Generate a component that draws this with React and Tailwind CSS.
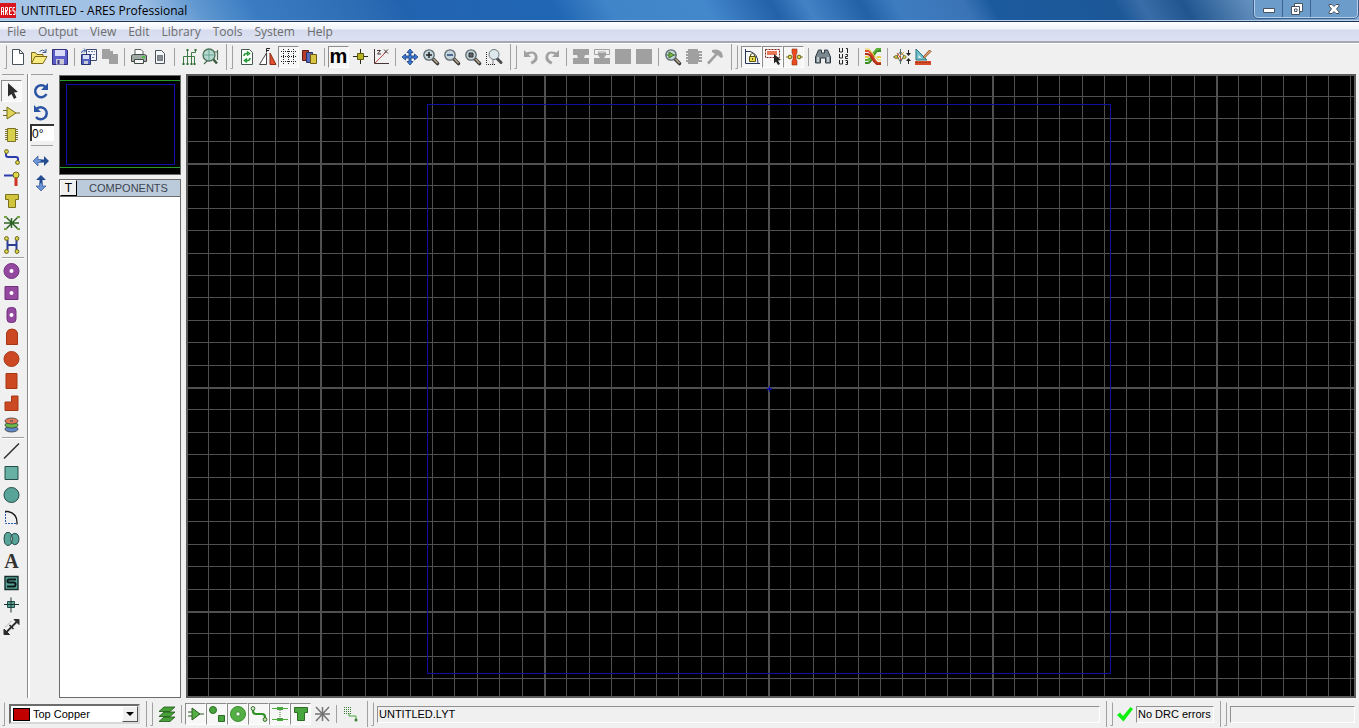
import React from 'react'

const menus = ['File', 'Output', 'View', 'Edit', 'Library', 'Tools', 'System', 'Help']

// shared shapes
const Lens = ({ children }) => (
  <>
    <path d="M11.500 11.500l5 5" stroke="#3c3c3c" strokeWidth="3.600" strokeLinecap="round" />
    <path d="M12.500 12l4 4.300" stroke="#b8a888" strokeWidth="1.400" />
    <circle cx="8" cy="8" r="5.200" fill="#c4d6dc" stroke="#5c666c" strokeWidth="1.300" />
    {children}
  </>
)

const Dot = ({ x, y, fill = '#e0d848', stroke = '#66621c' }) => (
  <circle cx={x} cy={y} r="1.900" fill={fill} stroke={stroke} strokeWidth="1" />
)

const TShape = ({ fill, stroke }) => (
  <path d="M3.500 3.500h13v5h-3v8h-7v-8h-3z" fill={fill} stroke={stroke} />
)

const icons = {
  newFile: <path d="M4.500 2.500h7l4 4v11h-11zM11.500 2.500v4h4" fill="#fff" stroke="#4a545e" />,
  open: (
    <>
      <path d="M2.500 16V5.500h4l1.500 2h6V10" fill="#f2e070" stroke="#7c6a1c" />
      <path d="M2.500 16.500l3.500-7h12l-4 7z" fill="#f8ec80" stroke="#7c6a1c" />
      <path d="M10.500 4.500q3-3 6 0M17 2v3.500h-3.500" fill="none" stroke="#3a5c8c" />
    </>
  ),
  save: (
    <>
      <path d="M2.500 2.500h14l1 1v14h-15z" fill="#5c5cc8" stroke="#30307c" />
      <path d="M5 3h10v6H5z" fill="#d8dcf8" />
      <path d="M6 12h8v5.500H6z" fill="#c8c8d4" />
      <path d="M7.500 13h2v4h-2z" fill="#38388c" />
    </>
  ),
  importFile: (
    <>
      <path d="M7.500 2.500h10v11h-10z" fill="#f4f4fc" stroke="#3c4870" />
      <path d="M9 4.500h7M11 7.500h5M13 10.500h3" stroke="#6c78b0" strokeDasharray="2 1" />
      <path d="M2.500 7.500h9v10h-9z" fill="#5464c0" stroke="#283474" />
      <path d="M4 8h6v4H4z" fill="#d8e0f8" />
      <path d="M5 14h4v3H5z" fill="#c8ccd8" />
      <path d="M2.500 6q0-3 4-2.500M5 1.500l2 2-2 2" fill="none" stroke="#3058a0" />
    </>
  ),
  exportFile: <path d="M2 2h8v2h3v3h5v10H9v-5H2z" fill="#a0a0a0" />,
  print: (
    <>
      <path d="M6 8V2.500h6l2 2V8" fill="#fff" stroke="#58605c" />
      <path d="M2.500 8.500l2-1h11l2 1v6h-15z" fill="#a0aaa4" stroke="#424a46" />
      <path d="M5.500 12.500h9v4h-9z" fill="#f4f4f4" stroke="#424a46" />
      <path d="M13 10h3" stroke="#48c040" strokeWidth="2" />
    </>
  ),
  printArea: (
    <>
      <path d="M5.500 3.500h6l3 3v10h-9z" fill="#f4f6f8" stroke="#48525a" />
      <path d="M7.500 8.500h5v5h-5z" fill="#848c92" stroke="#2c3238" strokeDasharray="1 1" />
    </>
  ),
  netlist: (
    <>
      <path d="M4.500 17V9.500h11V17M8.500 3v14M12.500 9v8M12.500 9V5.500h4V3" fill="none" stroke="#3e7a46" />
      <path d="M3.500 16h2v2h-2zM7.500 16h2v2h-2zM11.500 16h2v2h-2zM14.500 16h2v2h-2zM7.500 2h2v2h-2zM15.500 2h2v2h-2z" fill="#2e6a36" />
    </>
  ),
  netSearch: (
    <>
      <path d="M13 12l4 4.500" stroke="#3c5c44" strokeWidth="2.500" />
      <path d="M8 13l-4 4M17.500 3v10M14 5h4" stroke="#4c6c54" strokeWidth="1.200" />
      <circle cx="9" cy="8" r="6" fill="#b4d8d0" stroke="#4c7058" strokeWidth="1.300" />
      <path d="M4 8h10M9 3v10" stroke="#6ca898" />
    </>
  ),
  redraw: (
    <>
      <path d="M4.500 2.500h8l3 3v12h-11z" fill="#f8fff8" stroke="#485850" />
      <path d="M7 9q0-3 4-2.500M10 4.500l2.500 2-2.500 2M13 11q0 3-4 2.500M10 11.500l-2.500 2 2.500 2" fill="none" stroke="#1e9430" strokeWidth="1.500" />
    </>
  ),
  flip: (
    <>
      <path d="M8.500 6v11.500h-7z" fill="#fff" stroke="#444" />
      <path d="M12 6v11.500h6z" fill="#e05030" stroke="#8c2c14" />
      <path d="M8.500 5.500V1.500H12M8.500 3.500h2.500" fill="none" stroke="#222" />
    </>
  ),
  grid: (
    <g stroke="#222" strokeDasharray="1 1">
      <path d="M2 4.500h16M2 9.500h16M2 14.500h16M4.500 2v16M9.500 2v16M14.500 2v16" />
    </g>
  ),
  layers3: (
    <>
      <path d="M2.500 3.500h6v10h-6z" fill="#b43c28" stroke="#5c1c14" />
      <path d="M6.500 5.500h6v10h-6z" fill="#5868b8" stroke="#28306c" />
      <path d="M10.500 7.500h6v9h-6z" fill="#d8c440" stroke="#6c5c14" />
    </>
  ),
  origin: (
    <>
      <path d="M3 9.500h15M10.500 2v15" stroke="#2a2a1c" />
      <path d="M7.500 6.500h6v6h-6z" fill="#b8b420" stroke="#5c5810" />
    </>
  ),
  polar: (
    <>
      <path d="M3.500 2v14.500H18" fill="none" stroke="#443434" />
      <path d="M4 16L15 5" stroke="#c84848" />
      <path d="M6 3.500h3.500L6.500 7h3.500M13 2.500l4 4M17 2.500l-4 4" fill="none" stroke="#443434" />
    </>
  ),
  pan: (
    <path d="M10 2l3 3.500h-2V9h3.500V7L18 10l-3.500 3v-2H11v3.500h2L10 18l-3-3.500h2V11H5.500v2L2 10l3.500-3v2H9V5.500H7z" fill="#3c7cd4" stroke="#173a7c" strokeWidth=".8" />
  ),
  zoomIn: <Lens><path d="M5 8h6M8 5v6" stroke="#222" strokeWidth="1.500" /></Lens>,
  zoomOut: <Lens><path d="M5 8h6" stroke="#2c4478" strokeWidth="1.500" /></Lens>,
  zoomAll: <Lens><path d="M6 6h4v4H6z" fill="#5c6468" stroke="#333" /></Lens>,
  zoomArea: (
    <>
      <path d="M2.500 5v12.500H11M9 17.500V12" fill="none" stroke="#222" strokeDasharray="1 1" />
      <path d="M13 11.500l4 4" stroke="#4c4c4c" strokeWidth="3" strokeLinecap="round" />
      <circle cx="10" cy="7.500" r="5" fill="#dce8ec" stroke="#6c787c" />
    </>
  ),
  undo: (
    <path d="M3 3v7h7L7.500 7.500Q12 5 13.500 8.500T9.500 15l1.500 2.500q6.500-3 5.500-8.500Q14.500 2.500 5.500 5.500z" fill="#a0a0a0" />
  ),
  redo: (
    <path d="M17 3v7h-7l2.500-2.500Q8 5 6.500 8.500T10.500 15L9 17.500Q2.500 14.500 3.500 9 5.500 2.500 14.500 5.500z" fill="#a0a0a0" />
  ),
  blockCopy: <path d="M2 2h16v6h-4l-1 3h5v6H2v-6h5L6 8H2z" fill="#a0a0a0" />,
  blockMove: (
    <>
      <path d="M2.500 2.500h15v5h-4V5h-7v2.500h-4z" fill="none" stroke="#a0a0a0" />
      <path d="M6 6h8v2l-2 3h6v6H2v-6h6L6 8z" fill="#a0a0a0" />
    </>
  ),
  block: <path d="M2 2h16v15H2z" fill="#a0a0a0" />,
  pick: <Lens><path d="M6 5l5 3-5 3zM3 8h3M11 8h2" fill="#7cb83c" stroke="#3c7030" /></Lens>,
  makePackage: (
    <path d="M4 2h10v2h4v2h-3v1h3v2h-3v1h3v2h-3v1h3v2h-4v2H4v-2H2v-2h2v-1H2v-2h2V9H2V7h2V6H2V4h2z" fill="#a0a0a0" />
  ),
  hammer: <path d="M7 3q7-2 10 3l1 4-2 1-3.500-3L4 17.500l-2-2L10 7 7 5z" fill="#a0a0a0" />,
  lock: (
    <>
      <path d="M3.500 2v14.500H18M4 4.500h4q8 2 8 12" fill="none" stroke="#26365c" />
      <path d="M7.500 9.500h6v5h-6z" fill="#e8dc48" stroke="#5c5414" />
      <path d="M8.500 9V7.500q2-2 4 0V9M10.500 11v2" fill="none" stroke="#5c5414" />
    </>
  ),
  autoSelect: (
    <>
      <path d="M2.500 2.500h14v8h-14z" fill="none" stroke="#7c2018" strokeDasharray="2 1" />
      <path d="M4 4h10v4H4z" fill="#e87858" />
      <path d="M11 7l7 6-3 .5 2 3.500-2 1-2-3.500-2 2z" fill="#222" />
    </>
  ),
  neck: (
    <>
      <path d="M8 2h5v4l-1 2v4l1 2v4H8v-4l1-2V8L8 6z" fill="#e84c20" stroke="#943010" strokeWidth=".6" />
      <path d="M2 10h3M16 10h3" stroke="#8c7c20" />
      <Dot x={6} y={10} />
      <Dot x={15} y={10} />
    </>
  ),
  find: (
    <>
      <path d="M2.500 10l3-7h3v3h3V3h3l3 7v6h-5v-5h-5v5h-5z" fill="#7c8890" stroke="#303a42" />
      <path d="M5 10v5M15 10v5" stroke="#d4dce0" strokeWidth="1.500" />
    </>
  ),
  annotate: (
    <g fill="none" stroke="#222">
      <path d="M5.500 1v4h3V1M12 1.500h1.500V6M5.500 7v4h3V7M11.500 7.500h2v2h-2v2H14M5.500 13v4h3v-4M11.500 13.500h2v4h-2M12 15.500h1" />
    </g>
  ),
  autoRoute: (
    <g fill="none" strokeWidth="2.200">
      <path d="M2 16h3q2 0 5-6t5-6h3" stroke="#3c8c24" />
      <path d="M2 13h2q3 0 5-4t5-7h4" stroke="#5cac34" />
      <path d="M2 4h3q2 0 5 6t5 6h3" stroke="#e04c24" />
      <path d="M2 7h2q3 0 5 4t5 6h4" stroke="#b03018" />
      <path d="M2 10h4M14 10h4" stroke="#e4d040" />
      <path d="M2 2h4l9 11h3" stroke="#e8d848" strokeWidth="1" />
    </g>
  ),
  drc: (
    <>
      <path d="M8.500 2v15M1 10h3M5 9l3.500-4.500L12 9l-3.500 6z" fill="none" stroke="#5c6c64" />
      <path d="M5 12l7-7" stroke="#d8a030" />
      <path d="M5 6l5 7" stroke="#d84c30" />
      <circle cx="4" cy="10" r="1.500" fill="#e0d848" stroke="#66621c" strokeWidth=".8" />
      <circle cx="12.500" cy="10" r="1.500" fill="#e0d848" stroke="#66621c" strokeWidth=".8" />
      <path d="M16.500 3v4M16.500 17v-4" stroke="#222" />
      <path d="M14 6h5l-2.500 3zM14 14h5l-2.500-3z" fill="#222" />
    </>
  ),
  cadcam: (
    <>
      <path d="M3 2v11h11z" fill="#6cc0cc" stroke="#287480" />
      <path d="M5.500 8v3h3z" fill="#eee" />
      <path d="M2 14h16v4H2z" fill="#d84c28" />
      <path d="M4 15v1M7 15v1M10 15v1M13 15v1M16 15v1" stroke="#641c0c" />
      <path d="M10 10l6.500-7 1.500 1.500-6.500 6.500z" fill="#e8a060" stroke="#6c3c1c" strokeWidth=".8" />
    </>
  ),

  // mode selector
  arrow: <path d="M6 2l10 9-4 .5 2.500 5-2.500 1.500-2.500-5L6 15.500z" fill="#2c2c2c" />,
  component: (
    <>
      <path d="M1 7.500h4M1 12.500h4M14 10h4" stroke="#6c6820" />
      <path d="M5 4l9 6-9 6z" fill="#e0d458" stroke="#78701c" />
    </>
  ),
  packageMode: (
    <>
      <path d="M3 4.500h13M3 6.500h13M3 8.500h13M3 10.500h13M3 12.500h13M3 14.500h13" stroke="#7c7438" />
      <path d="M5.500 3.500h8v13h-8z" fill="#d8d04c" stroke="#7c7424" />
    </>
  ),
  track: (
    <>
      <path d="M4 4v4q0 2 2 2h8q2 0 2 2v4" fill="none" stroke="#2c3cac" strokeWidth="2" />
      <Dot x={4.5} y={4.5} />
      <Dot x={15.5} y={15.5} />
    </>
  ),
  via: (
    <>
      <path d="M2 6.500h10" stroke="#2c3cac" strokeWidth="2" />
      <path d="M14 8v9" stroke="#cc3420" strokeWidth="3" />
      <circle cx="14" cy="6" r="3" fill="#e0d848" stroke="#6c6820" />
    </>
  ),
  zoneMode: <TShape fill="#d0c43c" stroke="#78701c" />,
  ratsnest: (
    <>
      <path d="M4 4l12 12M16 4L4 16M2 10h15M9.500 5v10" stroke="#2c6424" strokeWidth="1.500" />
      <path d="M2 3h3v2H2zM15 3h3v2h-3zM2 15h3v2H2zM15 15h3v2h-3z" fill="#74a444" />
    </>
  ),
  connect: (
    <>
      <path d="M5.500 5v10M14.500 5v10M5.500 10h9" fill="none" stroke="#2c3c94" strokeWidth="2" />
      <Dot x={4.5} y={3.5} />
      <Dot x={15} y={3.5} />
      <Dot x={4.5} y={16.5} />
      <Dot x={15} y={16.5} />
    </>
  ),
  padRound: (
    <>
      <circle cx="9.500" cy="10" r="7.500" fill="#9448a0" stroke="#70307c" />
      <circle cx="9.500" cy="10" r="2" fill="#fff" />
    </>
  ),
  padSquare: (
    <>
      <path d="M3 3.500h13v13H3z" fill="#9448a0" stroke="#70307c" />
      <circle cx="9.500" cy="10" r="2" fill="#fff" />
    </>
  ),
  padDil: (
    <>
      <rect x="5" y="2.500" width="9" height="15" rx="3.500" fill="#9448a0" stroke="#70307c" />
      <circle cx="9.500" cy="10" r="2" fill="#fff" />
    </>
  ),
  padEdge: <path d="M4.500 17.500V6q1-4 5.500-4t5.500 4v11.500z" fill="#cc4822" stroke="#a43814" />,
  smtRound: <circle cx="9.500" cy="10" r="7.500" fill="#cc4822" stroke="#a43814" />,
  smtRect: <path d="M4 2.500h11v15H4z" fill="#cc4822" stroke="#a43814" />,
  smtPoly: <path d="M9.500 3h6.500v14.500H3V9h6.500z" fill="#cc4822" stroke="#a43814" />,
  padStack: (
    <g stroke="#3c3c3c" strokeWidth=".8">
      <ellipse cx="9.500" cy="14" rx="6.500" ry="3" fill="#5c88cc" />
      <ellipse cx="9.500" cy="10" rx="6.500" ry="3" fill="#68b848" />
      <ellipse cx="9.500" cy="6" rx="6.500" ry="3" fill="#e87858" />
      <ellipse cx="9.500" cy="6" rx="1.500" ry=".6" fill="#fff" />
    </g>
  ),
  line: <path d="M2 17.500L17 2.500" stroke="#2c2c30" strokeWidth="1.400" />,
  box: <path d="M3 3.500h13v13H3z" fill="#68b0a4" stroke="#244c48" />,
  circle: <circle cx="9.500" cy="10" r="7.500" fill="#58a498" stroke="#244c48" />,
  arc: (
    <>
      <path d="M3.500 4v12.500H15" fill="none" stroke="#2858b0" strokeDasharray="2 1" />
      <path d="M3 4.500h3q9 2 9 11v2" fill="none" stroke="#1c1c1c" strokeWidth="1.300" />
    </>
  ),
  path: (
    <path d="M9.500 5.500q-2-3-5-2Q2 5 2 10t3 6.500q3 .5 4.500-2.500 3 3 5.500 1 2-1.500 2-5t-2-5q-3-2-5.500 1 2.500 4 0 8-1.500-4 0-8.500z" fill="#58a498" stroke="#244c48" />
  ),
  symbol: (
    <>
      <path d="M3 3.500h13v13H3z" fill="#58a498" stroke="#16302c" strokeWidth="1.400" />
      <path d="M14 6.500H7q-1.500 0-1.500 1.500T7 9.500h5q1.500 0 1.500 2T12 13.500H5" fill="none" stroke="#0c1816" strokeWidth="2" />
    </>
  ),
  marker: (
    <>
      <path d="M5.500 6.500h7v6h-7z" fill="#58a498" stroke="#244c48" />
      <path d="M2 9.500h15M9 2.500v15" stroke="#1c3430" />
    </>
  ),
  dimension: (
    <>
      <path d="M4 15.500L15.500 4" stroke="#2c2c2c" strokeWidth="1.800" />
      <path d="M12 2.500h5v5zM2 12v5.500h5.500z" fill="#2c2c2c" stroke="#2c2c2c" />
      <path d="M7.500 8l4 4" stroke="#2c2c2c" strokeWidth="1.600" />
      <path d="M4 9.500l5-5" stroke="#444" strokeDasharray="1 2" />
    </>
  ),

  rotateCw: (
    <>
      <path d="M14.500 6A6 6 0 1 0 15.500 13" fill="none" stroke="#2c54a4" strokeWidth="2.500" />
      <path d="M17 2v7h-7z" fill="#2c54a4" />
    </>
  ),
  rotateCcw: (
    <>
      <path d="M5.500 6A6 6 0 1 1 5 14" fill="none" stroke="#2c54a4" strokeWidth="2.500" />
      <path d="M3 2v7h7z" fill="#2c54a4" />
    </>
  ),
  mirrorX: (
    <>
      <path d="M2 10l5-5v3.500h3v3H7V15z" fill="#6c94d4" stroke="#34589c" strokeWidth=".7" />
      <path d="M18 10l-5-5v3.500h-3v3h3V15z" fill="#244c90" />
    </>
  ),
  mirrorY: (
    <>
      <path d="M10 2L5 7h3.500v3h3V7H15z" fill="#244c90" />
      <path d="M10 18l-5-5h3.500v-3h3v3H15z" fill="#6c94d4" stroke="#34589c" strokeWidth=".7" />
    </>
  ),

  // selection filter
  layerStack: (
    <g fill="#48a038" stroke="#1c5414" strokeWidth=".8">
      <path d="M2 17.500l5-4.500h11l-5 4.500z" />
      <path d="M2 12.500L7 8h11l-5 4.500z" />
      <path d="M2 7.500L7 3h11l-5 4.500z" />
    </g>
  ),
  fComponent: (
    <>
      <path d="M2 8h4M2 12h4M14 10h4" stroke="#285c20" />
      <path d="M6 4l8 6-8 6z" fill="#54b044" stroke="#285c20" />
    </>
  ),
  fGraphics: (
    <>
      <circle cx="6" cy="6" r="3.500" fill="#48a43c" stroke="#2c6c24" />
      <path d="M11.500 11.500h6v6h-6z" fill="#48a43c" stroke="#2c6c24" />
    </>
  ),
  fPad: (
    <>
      <circle cx="10" cy="10" r="7.500" fill="#54b044" stroke="#3c8c30" />
      <circle cx="10" cy="10" r="2.200" fill="#f4fff0" stroke="#3c8c30" />
    </>
  ),
  fTrack: (
    <>
      <path d="M4 5v2q0 3 3 3h6q3 0 3 3v2" fill="none" stroke="#2c9424" strokeWidth="2.200" />
      <Dot x={4} y={4.5} fill="#e4f0d8" stroke="#2c6c24" />
      <Dot x={16} y={15.5} fill="#c4dca8" stroke="#2c6c24" />
    </>
  ),
  fVia: (
    <>
      <path d="M2 4.500h16M2 15.500h16" stroke="#54b044" />
      <path d="M7 4.500h6M7 15.500h6" stroke="#48a43c" strokeWidth="3" />
      <path d="M10 6v9" stroke="#4c7c44" strokeDasharray="1 1" />
    </>
  ),
  fZone: <TShape fill="#48a43c" stroke="#2c6c24" />,
  fRats: <path d="M4 3l13 14M17 3L4 17M3 10h15M10.500 3v14" stroke="#747474" strokeWidth="1.500" />,
  fRoute: (
    <>
      <path d="M3 3.500h7M3 5.500h7M3 7.500h7M3 9.500h7" stroke="#3c7c34" strokeDasharray="1 1" />
      <path d="M8 9v3h7v4" fill="none" stroke="#48a43c" />
      <circle cx="15" cy="16" r="1.500" fill="#3c7c34" />
    </>
  ),
}

const topGroups = [
  [
    [['newFile', 'New'], ['open', 'Open'], ['save', 'Save']],
    [['importFile', 'Import'], ['exportFile', 'Export']],
    [['print', 'Print'], ['printArea', 'Set print area']],
    [['netlist', 'Netlist'], ['netSearch', 'Net search']],
  ],
  [
    [['redraw', 'Redraw'], ['flip', 'Flip board'], ['grid', 'Grid', true], ['layers3', 'Layers']],
    [['metric', 'Metric', true], ['origin', 'Origin'], ['polar', 'Polar coordinates']],
    [['pan', 'Pan'], ['zoomIn', 'Zoom in'], ['zoomOut', 'Zoom out'], ['zoomAll', 'Zoom all'], ['zoomArea', 'Zoom area']],
  ],
  [
    [['undo', 'Undo'], ['redo', 'Redo']],
    [['blockCopy', 'Block copy'], ['blockMove', 'Block move'], ['block', 'Block rotate'], ['block', 'Block delete']],
    [['pick', 'Pick parts'], ['makePackage', 'Make package'], ['hammer', 'Decompose']],
  ],
  [
    [['lock', 'Trace angle lock', true], ['autoSelect', 'Auto trace selection', true], ['neck', 'Auto track necking', true]],
    [['find', 'Search'], ['annotate', 'Annotate']],
    [['autoRoute', 'Auto router']],
    [['drc', 'Connectivity check'], ['cadcam', 'CADCAM output']],
  ],
]

const modeGroups = [
  [['arrow', 'Selection', true], ['component', 'Component'], ['packageMode', 'Package'], ['track', 'Track'], ['via', 'Via'], ['zoneMode', 'Zone'], ['ratsnest', 'Ratsnest'], ['connect', 'Connectivity']],
  [['padRound', 'Round pad'], ['padSquare', 'Square pad'], ['padDil', 'DIL pad'], ['padEdge', 'Edge pad'], ['smtRound', 'Circular SMT pad'], ['smtRect', 'Rectangular SMT pad'], ['smtPoly', 'Polygonal SMT pad'], ['padStack', 'Pad stack']],
  [['line', 'Line'], ['box', 'Box'], ['circle', 'Circle'], ['arc', 'Arc'], ['path', 'Path'], ['text', 'Text'], ['symbol', 'Symbol'], ['marker', 'Marker'], ['dimension', 'Dimension']],
]

const filters = [
  ['fComponent', 'Components', true],
  ['fGraphics', 'Graphics', true],
  ['fPad', 'Pins', true],
  ['fTrack', 'Tracks', true],
  ['fVia', 'Vias', true],
  ['fZone', 'Zones', true],
  ['fRats', 'Ratsnest'],
]

// two of the tools show a letter instead of a drawing
const glyphs = {
  text: <span className="font-['Liberation_Serif',serif] text-[20px] leading-5 font-bold text-[#333]">A</span>,
  metric: <span className="pb-[2px] font-['Liberation_Sans',sans-serif] text-[20px] leading-5 font-bold text-black">m</span>,
}

function ToolButton({ icon, label, pressed }) {
  return (
    <button
      type="button"
      aria-label={label}
      aria-pressed={pressed}
      className={`flex h-[22px] w-[21px] shrink-0 items-center justify-center border ${
        pressed ? 'border-t-[#8c8c8c] border-l-[#8c8c8c] border-r-white border-b-white bg-[#f7f7f7]' : 'border-transparent'
      }`}
    >
      {glyphs[icon] || (
        <svg viewBox="0 0 20 20" fill="none" className="h-5 w-5 shrink-0">{icons[icon]}</svg>
      )}
    </button>
  )
}

const VLine = () => (
  <div className="flex w-2 shrink-0 justify-center">
    <div className="h-[18px] w-px bg-[#a0a0a0]" />
  </div>
)

const HLine = () => <div className="my-px ml-px h-[2px] w-[22px] border-t border-[#a0a0a0] border-b border-b-white" />

const Grip = () => <div className="h-6 w-[3px] shrink-0 rounded-xs border-r border-b border-[#a0a0a0]" />

// end of one rebar band and the grip of the next
const Band = () => (
  <div className="flex w-4 shrink-0 items-center gap-[3px] pl-[6px]">
    <div className="h-[26px] w-px shrink-0 bg-[#a0a0a0]" />
    <Grip />
  </div>
)

function TitleBar() {
  return (
    <header className="flex h-[22px] shrink-0 items-start justify-between border-b border-[#1c3454] bg-[linear-gradient(60deg,#a9c6e6_0%,#9dbfe4_11%,#5f97d0_15%,#3a7cc2_19%,#2c6cb4_27%,#2263b0_30%,#2066b4_41%,#4085c8_45%,#4488cc_52%,#2361a8_57%,#4482c6_59.5%,#2361a6_63.5%,#3e7cc0_66%,#3a74b6_71%,#1c5a9e_73%,#1c5898_82%,#3a6da8_84%,#20558f_87%,#7ea6d0_94%,#8db0d6_100%)] shadow-[inset_0_-1px_0_#b8d0ea]">
      <div className="flex h-[21px] items-center gap-[5px]">
        <div className="flex h-[15px] w-4 items-center justify-center bg-[#d8141c]">
          <svg viewBox="0 0 16 15" className="h-[15px] w-4" fill="none" stroke="#fff">
            <path d="M1.500 12V4.500h2V12M1 8.500h3M5.500 12V4.500h2v3h-2M6.500 8l1 4M12 4.500H9.500v7H12M9.500 8h2M15 4.500h-2v3.500h2v3.500h-2" />
          </svg>
        </div>
        <h1 className="text-[12px] leading-5 text-black">UNTITLED - ARES Professional</h1>
      </div>
      <div className="mr-px flex h-[18px] divide-x divide-[#3b608c] rounded-b-sm border border-t-0 border-[#b4cee8] bg-[#6c9cca] outline outline-[#3b608c]">
        <button type="button" aria-label="Minimize" className="flex w-7 items-center justify-center">
          <svg viewBox="0 0 12 12" className="h-3 w-3"><path d="M.5 5.500h11v4H.5z" fill="#fff" stroke="#4a5460" /></svg>
        </button>
        <button type="button" aria-label="Restore" className="flex w-7 items-center justify-center">
          <svg viewBox="0 0 12 12" className="h-3 w-3" fill="#fff" stroke="#4a5460"><path d="M3.500.5h8v8h-8z" /><path d="M.5 3.500h8v8h-8zM3.500 6h2.500v2.500H3.500z" /></svg>
        </button>
        <button type="button" aria-label="Close" className="flex w-[46px] items-center justify-center">
          <svg viewBox="0 0 12 12" className="h-3 w-3"><path d="M1 1.500h3l2 2 2-2h3v1.500L8.500 6 11 9v1.500H8l-2-2-2 2H1V9l2.500-3L1 3z" fill="#fff" stroke="#4a5460" /></svg>
        </button>
      </div>
    </header>
  )
}

function MenuBar() {
  return (
    <nav className="flex h-[21px] shrink-0 items-center gap-3 border-b-2 border-double border-[#a8a8b4] bg-[linear-gradient(#fff_0px,#f0f3fa_7px,#d6dcee_8px,#dce2f1_18px)] px-[7px] text-[12px] text-[#6d6d6d]">
      {menus.map((m) => (
        <button key={m} type="button" className="leading-4">{m}</button>
      ))}
    </nav>
  )
}

function TopToolbar() {
  return (
    <div className="flex h-[31px] shrink-0 items-center overflow-hidden border-t border-white pb-1 pl-1">
      <Grip />
      {topGroups.map((band, b) => (
        <React.Fragment key={b}>
          {b > 0 && <Band />}
          {band.map((group, g) => (
            <React.Fragment key={g}>
              {g > 0 && <VLine />}
              {group.map(([icon, label, pressed]) => (
                <ToolButton key={label} icon={icon} label={label} pressed={pressed} />
              ))}
            </React.Fragment>
          ))}
        </React.Fragment>
      ))}
    </div>
  )
}

function ModeBar() {
  return (
    <div className="flex w-[30px] shrink-0 flex-col border-r-2 border-white pl-px shadow-[inset_-1px_0_0_#8c8c8c]">
      <div className="mb-[5px] ml-px h-px w-[22px] bg-[#a0a0a0]" />
      {modeGroups.map((group, g) => (
        <React.Fragment key={g}>
          {g > 0 && <HLine />}
          {group.map(([icon, label, pressed]) => (
            <ToolButton key={label} icon={icon} label={label} pressed={pressed} />
          ))}
        </React.Fragment>
      ))}
    </div>
  )
}

function RotateBar() {
  return (
    <div className="flex w-[29px] shrink-0 flex-col items-start">
      <div className="mb-[5px] ml-px h-px w-[22px] bg-[#a0a0a0]" />
      <ToolButton icon="rotateCw" label="Rotate clockwise" />
      <ToolButton icon="rotateCcw" label="Rotate anti-clockwise" />
      <input
        aria-label="Rotation angle"
        defaultValue="0°"
        className="h-[17px] w-6 border-t-2 border-l-2 border-[#333] bg-white font-['Liberation_Sans',sans-serif] text-[12px] text-black"
      />
      <div className="my-1 ml-px h-px w-[22px] bg-[#a0a0a0]" />
      <ToolButton icon="mirrorX" label="Mirror horizontally" />
      <ToolButton icon="mirrorY" label="Mirror vertically" />
    </div>
  )
}

function SidePanel() {
  return (
    <aside className="flex w-[122px] shrink-0 flex-col gap-1 pt-px">
      <svg viewBox="0 0 122 100" className="h-[100px] w-full shrink-0 bg-black" fill="none" shapeRendering="crispEdges">
        <path d="M.5.5h121v99H.5z" stroke="#6c6c6c" />
        <path d="M1 5.500h120M1 92.500h120" stroke="#28a028" />
        <path d="M7.500 9.500h108v80h-108z" stroke="#1010b0" />
      </svg>
      <section className="flex flex-1 flex-col border border-[#6c6c6c] bg-white">
        <div className="flex h-[17px] items-stretch border-b border-[#6c6c6c] bg-[#bccbdb] font-['Liberation_Sans',sans-serif] text-[12px] leading-4">
          <button type="button" aria-label="Pick from library" className="w-[17px] border border-t-white border-r-black border-b-black border-l-white bg-[#f0f0f0] leading-[14px] text-black">T</button>
          <h2 className="flex-1 text-center text-[11px] text-[#3c4450]">COMPONENTS</h2>
        </div>
      </section>
    </aside>
  )
}

const STEP = 22.4
const gridLines = Array.from({ length: 121 }, (_, i) => i - 60)

function Board() {
  return (
    <main className="min-w-0 flex-1 border-2 border-[#5c5c5c] bg-black">
      <svg className="block h-full w-full" fill="none" shapeRendering="crispEdges">
        <svg x="50%" y="50%" overflow="visible">
          {/* grid is centred on the board origin, every tenth line is heavy */}
          {gridLines.map((i) => {
            const p = Math.round(i * STEP)
            const size = i % 10 === 0 ? 2 : 1
            return (
              <g key={i} fill="#505050">
                <rect x={p - 3} y="-2000" width={size} height="4000" />
                <rect x="-2000" y={p + 1} width="4000" height={size} />
              </g>
            )
          })}
          <g fill="#1010a0">
            <rect x="-344" y="-282" width="684" height="1" />
            <rect x="-344" y="287" width="684" height="1" />
            <rect x="-344" y="-282" width="1" height="570" />
            <rect x="339" y="-282" width="1" height="570" />
            <rect x="-4" y="2" width="5" height="2" />
            <rect x="-2" y="0" width="1" height="6" />
          </g>
        </svg>
      </svg>
    </main>
  )
}

const field = 'h-[17px] border border-t-[#909090] border-l-[#909090] border-r-white border-b-white pl-px leading-[15px] whitespace-nowrap'

function StatusBar() {
  return (
    <footer className="flex h-[30px] shrink-0 items-center pt-[2px] pr-1 pl-[2px] font-['Liberation_Sans',sans-serif] text-[11px] text-black">
      <Grip />
      <div className="relative ml-1 flex shrink-0 items-center">
        <select
          aria-label="Layer"
          defaultValue="top"
          className="h-5 w-[131px] appearance-none border-2 border-t-[#6c6c6c] border-r-[#d8d8d8] border-b-[#d8d8d8] border-l-[#6c6c6c] bg-white pl-[22px] leading-4"
        >
          <option value="top">Top Copper</option>
          <option value="bottom">Bottom Copper</option>
        </select>
        <span className="pointer-events-none absolute left-1 h-[13px] w-[17px] border border-black bg-[#c00000]" />
        <span className="pointer-events-none absolute right-[2px] flex h-4 w-4 items-center justify-center border border-t-white border-r-[#555] border-b-[#555] border-l-white bg-[#f0f0f0]">
          <svg viewBox="0 0 8 4" className="h-1 w-2"><path d="M0 0h8L4 4z" /></svg>
        </span>
      </div>
      <Band />
      <ToolButton icon="layerStack" label="Layers" />
      <VLine />
      {filters.map(([icon, label, pressed]) => (
        <ToolButton key={label} icon={icon} label={label} pressed={pressed} />
      ))}
      <VLine />
      <ToolButton icon="fRoute" label="Trace filter" />
      <Band />
      <div className={`${field} flex-1`}>UNTITLED.LYT</div>
      <Band />
      <svg viewBox="0 0 18 16" className="mr-[2px] h-4 w-[18px] shrink-0"><path d="M1 9l3-2.500 3 3.500L14.500 1 17 3 7.500 15.500z" fill="#0cf00c" /></svg>
      <div className={`${field} w-[78px] shrink-0`}>No DRC errors</div>
      <Band />
      <div className={`${field} w-[125px] shrink-0`} />
    </footer>
  )
}

export default function App() {
  return (
    <div className="flex h-screen flex-col overflow-hidden bg-[#f0f0f0] font-['Open_Sans','Noto_Sans',sans-serif]">
      <TitleBar />
      <MenuBar />
      <TopToolbar />
      <div className="flex min-h-0 flex-1">
        <ModeBar />
        <RotateBar />
        <SidePanel />
        <div className="flex min-w-0 flex-1 pr-[3px] pl-[5px]">
          <Board />
        </div>
      </div>
      <StatusBar />
    </div>
  )
}
